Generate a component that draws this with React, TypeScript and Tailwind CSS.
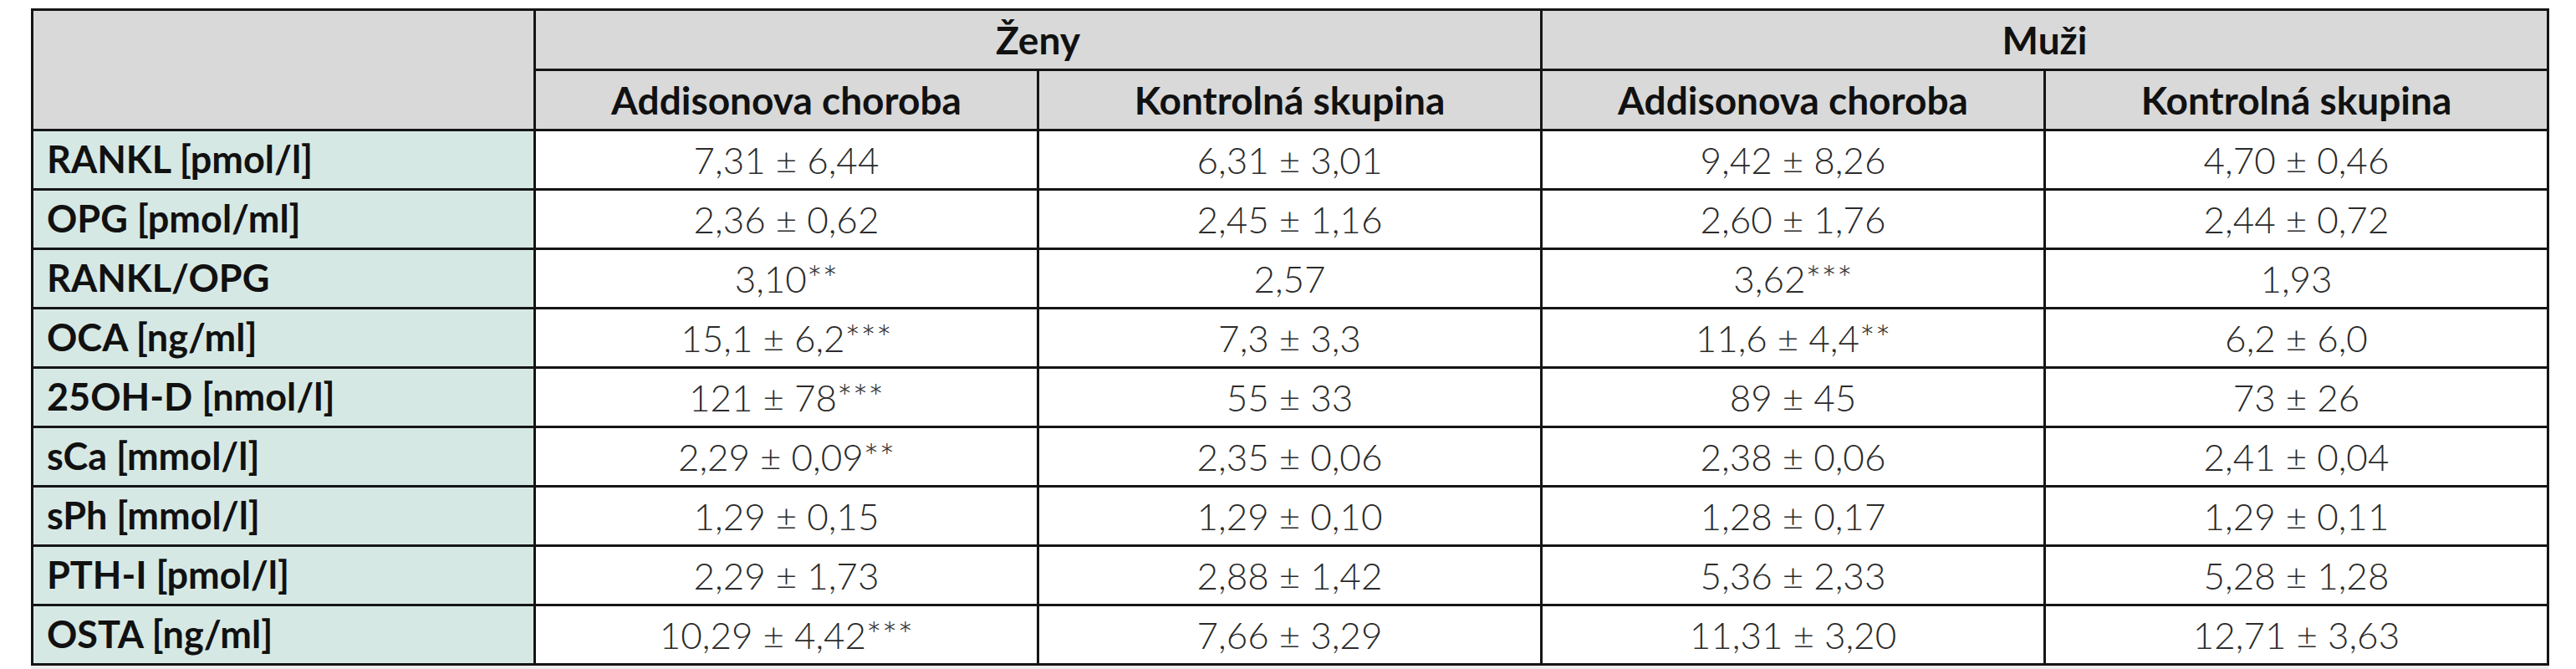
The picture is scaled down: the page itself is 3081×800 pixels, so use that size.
const rows: [string, string, string, string, string][] = [
  ["RANKL [pmol/l]", "7,31 ± 6,44", "6,31 ± 3,01", "9,42 ± 8,26", "4,70 ± 0,46"],
  ["OPG [pmol/ml]", "2,36 ± 0,62", "2,45 ± 1,16", "2,60 ± 1,76", "2,44 ± 0,72"],
  ["RANKL/OPG", "3,10**", "2,57", "3,62***", "1,93"],
  ["OCA [ng/ml]", "15,1 ± 6,2***", "7,3 ± 3,3", "11,6 ± 4,4**", "6,2 ± 6,0"],
  ["25OH-D [nmol/l]", "121 ± 78***", "55 ± 33", "89 ± 45", "73 ± 26"],
  ["sCa [mmol/l]", "2,29 ± 0,09**", "2,35 ± 0,06", "2,38 ± 0,06", "2,41 ± 0,04"],
  ["sPh [mmol/l]", "1,29 ± 0,15", "1,29 ± 0,10", "1,28 ± 0,17", "1,29 ± 0,11"],
  ["PTH-I [pmol/l]", "2,29 ± 1,73", "2,88 ± 1,42", "5,36 ± 2,33", "5,28 ± 1,28"],
  ["OSTA [ng/ml]", "10,29 ± 4,42***", "7,66 ± 3,29", "11,31 ± 3,20", "12,71 ± 3,63"],
];

const App = () => {
  return (
    <div className="bg-white pt-[10px] pl-[37px] font-[Lato,'Open_Sans',sans-serif]">
      <table className="w-[3011px] table-fixed border-collapse border-[3px] border-[#151515]">
        <colgroup>
          <col className="w-[601px]" />
          <col className="w-[602px]" />
          <col className="w-[602px]" />
          <col className="w-[602px]" />
          <col className="w-[602px]" />
        </colgroup>
        <thead className="text-[46px] font-bold text-[#111]">
          <tr className="h-[71px] bg-[#d9d9d9]">
            <th rowSpan={2} className="border-[3px] border-[#151515]"></th>
            <th colSpan={2} className="border-[3px] border-[#151515] font-bold">
              Ženy
            </th>
            <th colSpan={2} className="border-[3px] border-[#151515] font-bold">
              Muži
            </th>
          </tr>
          <tr className="h-[71px] bg-[#d9d9d9]">
            <th className="border-[3px] border-[#151515] font-bold">Addisonova choroba</th>
            <th className="border-[3px] border-[#151515] font-bold">Kontrolná skupina</th>
            <th className="border-[3px] border-[#151515] font-bold">Addisonova choroba</th>
            <th className="border-[3px] border-[#151515] font-bold">Kontrolná skupina</th>
          </tr>
        </thead>
        <tbody>
          {rows.map((r) => (
            <tr key={r[0]} className="h-[71px]">
              <td className="border-[3px] border-[#151515] bg-[#d6e8e4] pl-[16px] text-left text-[45px] font-bold text-[#111]">
                {r[0]}
              </td>
              {r.slice(1).map((v, i) => (
                <td key={i} className="border-[3px] border-[#151515] bg-white text-center text-[44px] font-light text-[#2b2b2b]">
                  {v}
                </td>
              ))}
            </tr>
          ))}
        </tbody>
      </table>
      <div className="h-[8px] w-[3011px] bg-[#ececec]"></div>
    </div>
  );
};

export default App;
